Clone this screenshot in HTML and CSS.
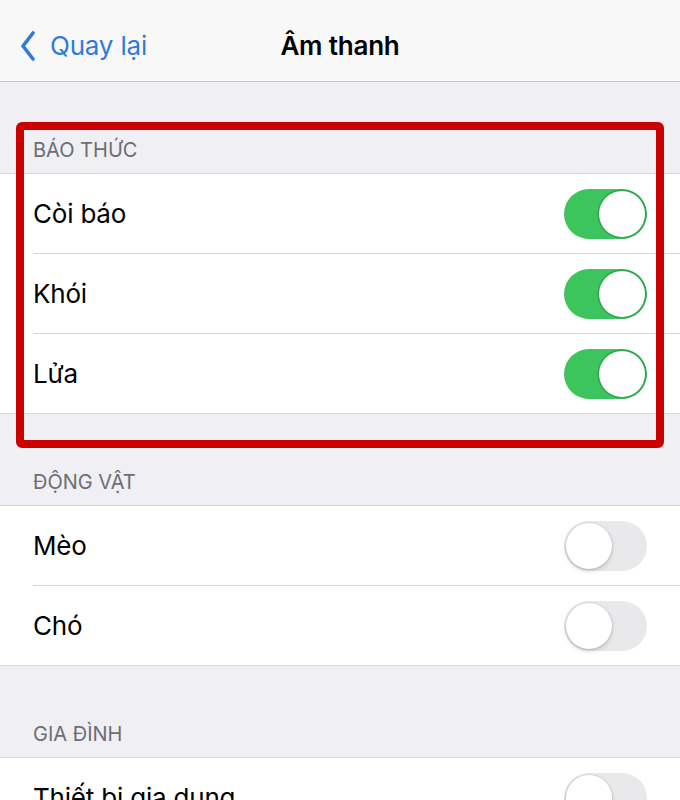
FILE: index.html
```html
<!DOCTYPE html>
<html lang="vi">
<head>
    <meta charset="UTF-8">
    <meta name="viewport" content="width=device-width, initial-scale=1.0">
    <title>Âm thanh</title>
    <link rel="stylesheet" href="styles.css">
</head>
<body>
    <div class="navbar">
        <a class="back" href="#">
            <svg class="chevron" width="16" height="30" viewBox="0 0 16 30">
                <path d="M13 2 L3 15 L13 28" fill="none" stroke="#2f7bdc" stroke-width="3.6" stroke-linecap="round" stroke-linejoin="round"/>
            </svg>
            <span>Quay lại</span>
        </a>
        <div class="title">Âm thanh</div>
        <div></div>
    </div>

    <div class="section-header">BÁO THỨC</div>
    <div class="group">
        <div class="row"><span class="label">Còi báo</span><span class="switch on"><span class="knob"></span></span></div>
        <div class="row"><span class="label">Khói</span><span class="switch on"><span class="knob"></span></span></div>
        <div class="row"><span class="label">Lửa</span><span class="switch on"><span class="knob"></span></span></div>
    </div>

    <div class="section-header">ĐỘNG VẬT</div>
    <div class="group">
        <div class="row"><span class="label">Mèo</span><span class="switch"><span class="knob"></span></span></div>
        <div class="row"><span class="label">Chó</span><span class="switch"><span class="knob"></span></span></div>
    </div>

    <div class="section-header">GIA ĐÌNH</div>
    <div class="group">
        <div class="row"><span class="label">Thiết bị gia dụng</span><span class="switch"><span class="knob"></span></span></div>
    </div>

    <div class="highlight"></div>
</body>
</html>
```

FILE: styles.css
```css
body {
    font-family: 'Inter', 'Liberation Sans', sans-serif;
    margin: 0;
    background-color: #efeff4;
    color: #000000;
    position: relative;
    height: 800px;
    overflow: hidden;
}
.navbar {
    height: 71px;
    padding-top: 10px;
    background-color: #f8f8f8;
    border-bottom: 1px solid #c8c8cc;
    display: grid;
    grid-template-columns: 1fr auto 1fr;
    align-items: center;
}
.back {
    display: flex;
    align-items: center;
    gap: 14px;
    padding-left: 20px;
    color: #2f7bdc;
    text-decoration: none;
    font-size: 26px;
    letter-spacing: -0.2px;
}
.title {
    font-size: 26px;
    font-weight: 600;
    letter-spacing: -0.2px;
}
.section-header {
    height: 91px;
    box-sizing: border-box;
    display: flex;
    align-items: flex-end;
    padding: 0 33px 11px;
    font-size: 20px;
    line-height: 24px;
    color: #6d6d72;
}
.group {
    background-color: #ffffff;
    border-top: 1px solid #d6d6da;
    border-bottom: 1px solid #d6d6da;
    padding-left: 33px;
}
.row {
    height: 79px;
    display: flex;
    align-items: center;
    justify-content: space-between;
    padding-right: 33px;
    border-bottom: 1px solid #d6d6da;
}
.row:last-child {
    border-bottom: none;
}
.label {
    font-size: 26px;
    letter-spacing: -0.2px;
}
.switch {
    width: 83px;
    height: 50px;
    border-radius: 25px;
    background-color: #e9e9eb;
    position: relative;
    box-sizing: border-box;
}
.switch.on {
    background-color: #3cc55c;
}
.knob {
    position: absolute;
    top: 2px;
    left: 2px;
    width: 46px;
    height: 46px;
    border-radius: 50%;
    background-color: #ffffff;
    box-shadow: 0 2px 4px rgba(0, 0, 0, 0.18), 0 0 0 1px rgba(0, 0, 0, 0.06);
}
.switch.on .knob {
    left: auto;
    right: 2px;
    box-shadow: 0 0 0 1.5px #2fa84d;
}
.highlight {
    position: absolute;
    top: 122px;
    left: 16px;
    width: 648px;
    height: 326px;
    box-sizing: border-box;
    border: 8px solid #cc0000;
    border-radius: 6px;
}
```
